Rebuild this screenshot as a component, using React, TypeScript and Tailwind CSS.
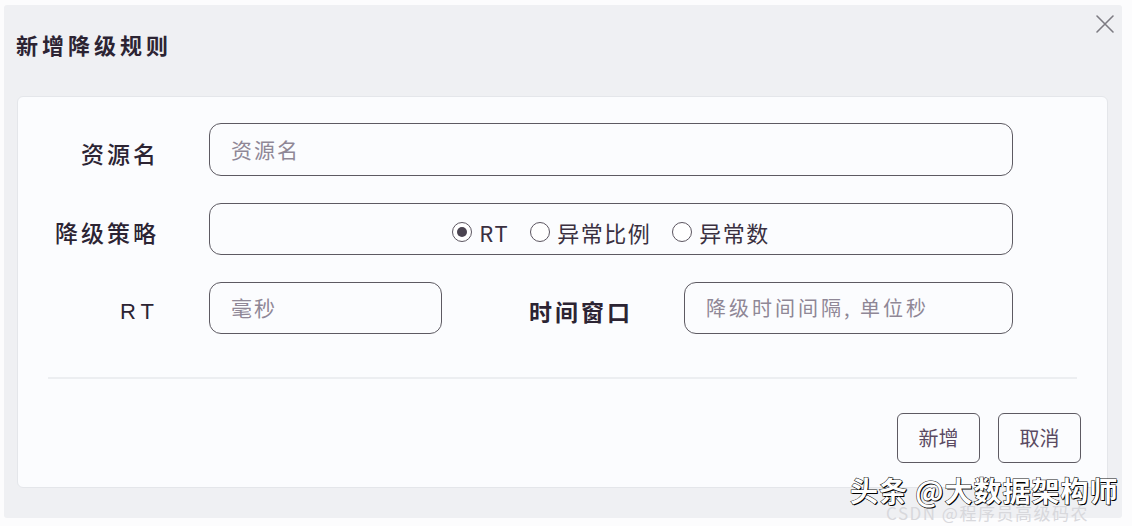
import React from "react";

const font = { fontFamily: '"Noto Sans CJK SC", "Noto Sans", sans-serif' };

function Radio({ checked, label }: { checked?: boolean; label: string }) {
  return (
    <div className="flex items-center gap-[7px]">
      <span className="flex h-[20px] w-[20px] items-center justify-center rounded-full border-[1.5px] border-[#5b5560] bg-white">
        {checked && <span className="h-[10px] w-[10px] rounded-full bg-[#4a4350]" />}
      </span>
      <span className="text-[22px] leading-none tracking-[1.5px] text-[#3a3040]">{label}</span>
    </div>
  );
}

export default function App() {
  return (
    <div className="relative h-[526px] w-[1132px] overflow-hidden bg-[#fcfcfd]" style={font}>
      <div className="ml-[4px] mt-[5px] flex h-[513px] w-[1118px] flex-col rounded-[3px] bg-[#eff0f3]">
        <div className="flex h-[91px] items-start justify-between">
          <h1 className="mt-[24px] pl-[12px] text-[22px] font-bold leading-[30px] tracking-[4px] text-[#2c2433]">新增降级规则</h1>
          <svg className="mr-[7px] mt-[9px]" width="20" height="20" viewBox="0 0 20 20" fill="none" stroke="#7d7b82" strokeWidth="1.6" strokeLinecap="round">
            <path d="M2 2L18 18M18 2L2 18" />
          </svg>
        </div>
        <div className="ml-[13px] flex h-[392px] w-[1091px] flex-col rounded-[6px] border border-[#e4e6ea] bg-[#fbfcfe]">
          <div className="mt-[26px] flex flex-col gap-[27px]">
            <div className="flex items-center">
              <div className="w-[141px] pt-[7px] text-right text-[23px] font-medium tracking-[3px] text-[#2c2433]">资源名</div>
              <div className="ml-[50px] flex h-[53px] w-[804px] items-center rounded-[12px] border-[1.5px] border-[#5d5a62] bg-[#fbfcfe] pl-[21px] text-[21px] tracking-[2px] text-[#8f8796]">资源名</div>
            </div>
            <div className="flex items-center">
              <div className="w-[141px] pt-[7px] text-right text-[23px] font-medium tracking-[3px] text-[#2c2433]">降级策略</div>
              <div className="ml-[50px] flex h-[52px] w-[804px] items-center justify-center gap-[21px] rounded-[12px] border-[1.5px] border-[#5d5a62] bg-[#fbfcfe] pt-[6px]">
                <Radio checked label="RT" />
                <Radio label="异常比例" />
                <Radio label="异常数" />
              </div>
            </div>
            <div className="flex items-center">
              <div className="w-[141px] pt-[7px] text-right text-[22px] font-medium tracking-[5px] text-[#2c2433]" style={{ fontFamily: '"Liberation Sans", sans-serif' }}>RT</div>
              <div className="ml-[50px] flex h-[52px] w-[233px] items-center rounded-[12px] border-[1.5px] border-[#5d5a62] bg-[#fbfcfe] pl-[21px] text-[21px] tracking-[2px] text-[#8f8796]">毫秒</div>
              <div className="ml-[87px] w-[110px] pt-[7px] text-[23px] font-bold tracking-[3px] text-[#2c2433]">时间窗口</div>
              <div className="ml-[45px] flex h-[52px] w-[329px] items-center rounded-[12px] border-[1.5px] border-[#5d5a62] bg-[#fbfcfe] pl-[21px] text-[20px] tracking-[3px] text-[#8f8796]">降级时间间隔, 单位秒</div>
            </div>
          </div>
          <div className="mx-[30px] mt-[43px] h-[2px] bg-[#eceef1]" />
          <div className="mr-[26px] mt-[34px] flex justify-end gap-[18px]">
            <button className="flex h-[50px] w-[83px] items-center justify-center rounded-[6px] border-[1.5px] border-[#5d5a62] bg-[#fbfcfe] text-[20px] text-[#5a4a62]">新增</button>
            <button className="flex h-[50px] w-[83px] items-center justify-center rounded-[6px] border-[1.5px] border-[#5d5a62] bg-[#fbfcfe] text-[20px] text-[#5a4a62]">取消</button>
          </div>
        </div>
      </div>
      <div className="absolute left-[886px] top-[504px] text-[17px] leading-none tracking-[1.5px] text-[#d8d8dc]">CSDN @程序员高级码农</div>
      <div
        className="absolute left-[850px] top-[476px] text-[28px] font-bold leading-none tracking-[1px] text-white"
        style={{ WebkitTextStroke: "1px #111", paintOrder: "stroke fill", textShadow: "1px 1px 0 #000" }}
      >
        头条 @大数据架构师
      </div>
    </div>
  );
}
